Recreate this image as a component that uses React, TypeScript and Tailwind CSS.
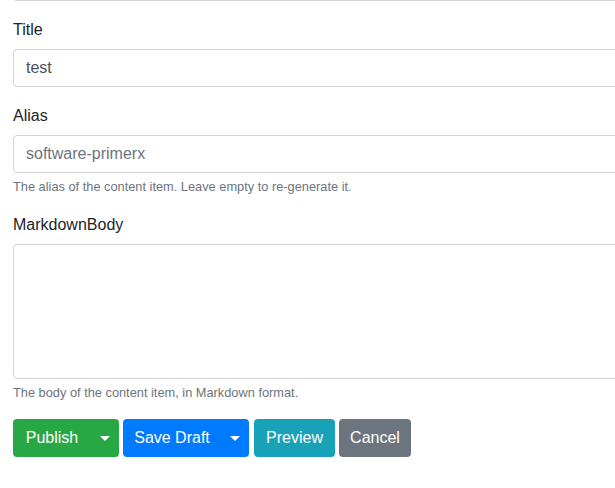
import React from 'react';

const font = { fontFamily: '"Segoe UI", "Liberation Sans", Arial, sans-serif' };

const Caret = () => (
  <span className="inline-block w-0 h-0 border-x-[5px] border-x-transparent border-t-[5px] border-t-white align-middle" />
);

const SplitButton: React.FC<{ label: string; color: string; width: string }> = ({ label, color, width }) => (
  <div className={`inline-flex rounded-[4px] overflow-hidden ${color}`}>
    <button className={`h-[38px] ${width} text-white text-base leading-6`}>{label}</button>
    <button className="h-[38px] w-[28px] flex items-center justify-center">
      <Caret />
    </button>
  </div>
);

const Field: React.FC<{ label: string; children: React.ReactNode; help?: string }> = ({ label, children, help }) => (
  <div className="mb-4">
    <label className="block text-base leading-6 text-[#212529] pt-[1px] mb-[7px]">{label}</label>
    {children}
    {help && <div className="mt-1 text-[12.8px] leading-[19.2px] text-[#6c757d]">{help}</div>}
  </div>
);

const inputCls =
  'block w-[660px] h-[38px] px-3 border border-[#ced4da] rounded-[4px] text-base text-[#495057] bg-white outline-none placeholder:text-[#6c757d]';

export default function App() {
  return (
    <div className="w-[615px] h-[488px] overflow-hidden bg-white" style={font}>
      <div className="pl-[13px]">
        <div className="w-[660px] h-[4px] -mt-[3px] border-x border-b border-[#ced4da] rounded-b-[4px] mb-4" />

        <Field label="Title">
          <input className={inputCls} defaultValue="test" />
        </Field>

        <Field label="Alias" help="The alias of the content item. Leave empty to re-generate it.">
          <input className={inputCls} placeholder="software-primerx" />
        </Field>

        <Field label="MarkdownBody" help="The body of the content item, in Markdown format.">
          <textarea className="block w-[660px] h-[135px] px-3 py-[6px] border border-[#ced4da] rounded-[4px] text-base text-[#495057] bg-white outline-none resize-none" />
        </Field>

        <div className="flex gap-[4px] -mt-[15px] pt-[16px]">
          <SplitButton label="Publish" color="bg-[#28a745]" width="w-[78px]" />
          <SplitButton label="Save Draft" color="bg-[#007bff]" width="w-[98px]" />
          <button className="h-[38px] w-[81px] rounded-[4px] bg-[#17a2b8] text-white text-base ml-[1px]">Preview</button>
          <button className="h-[38px] w-[72px] rounded-[4px] bg-[#6c757d] text-white text-base">Cancel</button>
        </div>
      </div>
    </div>
  );
}
